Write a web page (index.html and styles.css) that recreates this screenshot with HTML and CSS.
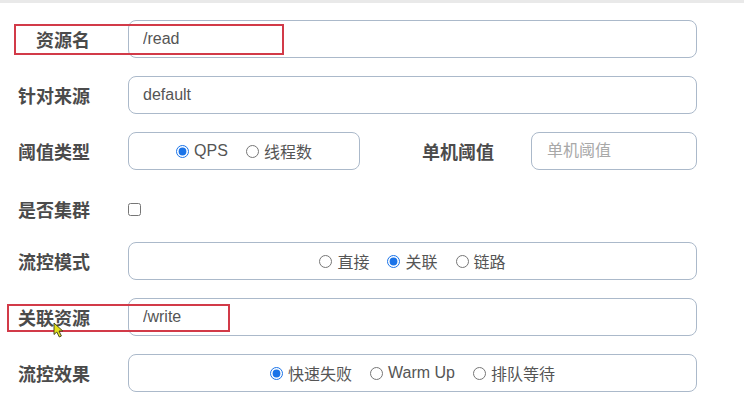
FILE: index.html
```html
<!doctype html>
<html lang="zh-CN">
<head>
<title>流控规则</title>
<meta charset=UTF-8>
<meta name="viewport" content="width=device-width, initial-scale=1.0">
<link rel="stylesheet" href="styles.css">
</head>
<body>
<div class="topbar"></div>
<form class="form">
<div class="row">
<label class="lbl">资源名</label>
<input class="field" type="text" value="/read">
<span class="mark mark-res"></span>
</div>
<div class="row">
<label class="lbl">针对来源</label>
<input class="field" type="text" value="default">
</div>
<div class="row">
<label class="lbl">阈值类型</label>
<div class="field group small">
<label class="opt"><input type="radio" name="grade" checked>QPS</label>
<label class="opt"><input type="radio" name="grade">线程数</label>
</div>
<label class="lbl inline">单机阈值</label>
<input class="field narrow" type="text" placeholder="单机阈值">
</div>
<div class="row check">
<label class="lbl">是否集群</label>
<input class="box" type="checkbox">
</div>
<div class="row">
<label class="lbl">流控模式</label>
<div class="field group">
<label class="opt"><input type="radio" name="strategy">直接</label>
<label class="opt"><input type="radio" name="strategy" checked>关联</label>
<label class="opt"><input type="radio" name="strategy">链路</label>
</div>
</div>
<div class="row">
<label class="lbl">关联资源</label>
<input class="field" type="text" value="/write">
<span class="mark mark-rel"></span>
<svg class="cursor" viewBox="0 0 11 16" width="11" height="16">
<path d="M1 1 L1 12.5 L3.8 10 L6.3 15 L8.4 14 L6 9 L9.8 9 Z" fill="#e3e01c" stroke="#3a3a1a" stroke-width="0.9" stroke-linejoin="round"/>
</svg>
</div>
<div class="row">
<label class="lbl">流控效果</label>
<div class="field group">
<label class="opt"><input type="radio" name="behavior" checked>快速失败</label>
<label class="opt"><input type="radio" name="behavior">Warm Up</label>
<label class="opt"><input type="radio" name="behavior">排队等待</label>
</div>
</div>
</form>
</body>
</html>
```

FILE: styles.css
```css
body {margin: 0; background-color: #fff; font-family: "Liberation Sans", "Noto Sans CJK SC", sans-serif;}
.topbar {height: 3px; background-color: #e9e9e9;}
.form {display: flex; flex-direction: column; gap: 18px; padding-top: 17px; margin: 0;}
.row {display: flex; align-items: center; height: 38px; position: relative;}
.row.check {height: 30px; padding-top: 6px;}
.lbl {flex: none; width: 90px; margin-right: 38px; text-align: right; font-size: 18px; font-weight: bold; color: #4b4b4b;}
.lbl.inline {width: auto; margin: 0 37px 0 62px;}
.field {flex: none; box-sizing: border-box; width: 569px; height: 38px; margin: 0; padding: 0 14px; border: 1px solid #abb9ca; border-radius: 8px; background-color: #fff; font-family: inherit; font-size: 16px; color: #555; outline: none;}
.field.narrow {width: 166px; padding-left: 15px;}
.field::placeholder {color: #a8a8a8;}
.group {display: flex; justify-content: center; align-items: center; gap: 18px;}
.group.small {width: 232px;}
.opt {display: flex; align-items: center; font-size: 16px; color: #555;}
.opt input {width: 13px; height: 13px; margin: 0 5px 0 0; accent-color: #1a73e8;}
.box {width: 13px; height: 13px; margin: 0;}
.mark {position: absolute; box-sizing: border-box; border: 2px solid #d23a48; pointer-events: none;}
.mark-res {left: 14px; top: 4px; width: 270px; height: 31px;}
.mark-rel {left: 7px; top: 6px; width: 223px; height: 28px;}
.cursor {position: absolute; left: 53px; top: 24px;}
```
